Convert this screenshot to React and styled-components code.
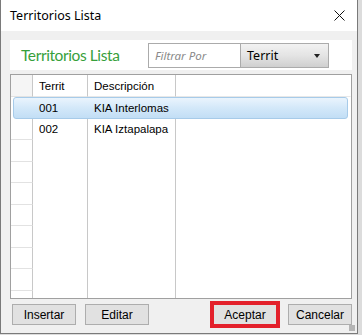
import React from 'react';
import styled, { createGlobalStyle } from 'styled-components';

const GlobalStyle = createGlobalStyle`
  html, body {
    margin: 0;
    padding: 0;
    background: #dcdcdc;
    width: 362px;
    height: 335px;
    overflow: hidden;
  }
`;

const Window = styled.div`
  width: 356px;
  height: 333px;
  background: #f0f0f0;
  border-left: 1px solid #7a7a7a;
  border-right: 1px solid #7a7a7a;
  border-bottom: 1px solid #7a7a7a;
  display: flex;
  flex-direction: column;
  font-family: "Liberation Sans", Arial, sans-serif;
  position: relative;
`;

const TitleBar = styled.div`
  height: 31px;
  background: #ffffff;
  display: flex;
  align-items: center;
  justify-content: space-between;
  padding: 0 8px 0 9px;
  font-family: "Noto Sans", "Open Sans", sans-serif;
  font-size: 12.5px;
  color: #000;
`;

const CloseButton = styled.div`
  width: 12px;
  height: 12px;
  margin-right: 4px;
  display: flex;
  align-items: center;
  justify-content: center;
`;

const Body = styled.div`
  flex: 1;
  display: flex;
  flex-direction: column;
  padding: 9px 5px 0 9px;
`;

const HeaderPanel = styled.div`
  height: 30px;
  background: #ffffff;
  display: flex;
  align-items: center;
  padding-left: 11px;
`;

const HeaderTitle = styled.div`
  font-family: Lato, "Noto Sans", sans-serif;
  font-size: 15.5px;
  letter-spacing: -0.4px;
  color: #36a03b;
  margin-top: -1px;
`;

const FilterGroup = styled.div`
  margin-left: auto;
  margin-right: 23px;
  display: flex;
  height: 25px;
  border: 1px solid #ababab;
  box-sizing: border-box;
`;

const FilterInput = styled.div`
  width: 92px;
  background: #fff;
  border-right: 1px solid #ababab;
  display: flex;
  align-items: center;
  padding-left: 6px;
  box-sizing: border-box;
  font-family: "Noto Sans", "Open Sans", sans-serif;
  font-style: italic;
  font-size: 11.5px;
  color: #8a8a8a;
`;

const Dropdown = styled.div`
  width: 87px;
  background: linear-gradient(to bottom, #f2f2f2 0%, #e4e4e4 50%, #cfcfcf 100%);
  display: flex;
  align-items: center;
  justify-content: space-between;
  padding: 1px 6px 0 6px;
  box-sizing: border-box;
  font-family: "Noto Sans", "Open Sans", sans-serif;
  font-size: 12.5px;
  color: #000;
`;

const Arrow = styled.div`
  width: 0;
  height: 0;
  border-left: 3.5px solid transparent;
  border-right: 3.5px solid transparent;
  border-top: 4px solid #222;
  margin-right: 2px;
`;

const Grid = styled.div`
  margin-top: 4px;
  height: 225px;
  width: 342px;
  background: #fff;
  border: 1px solid #a0a0a0;
  box-sizing: border-box;
  overflow: hidden;
  display: flex;
  flex-direction: column;
`;

const Row = styled.div`
  display: flex;
  height: ${p => (p.$header ? 22 : 21.5)}px;
  flex-shrink: 0;
  position: relative;

  ${p => p.$selected && `
    &::before {
      content: '';
      position: absolute;
      left: 2px;
      right: 3px;
      top: 0;
      bottom: 0;
      border: 1px solid #a7cbe9;
      border-radius: 3px;
      background: linear-gradient(to bottom, #eaf4fd 0%, #d3e8f9 50%, #c2def5 100%);
    }
  `}
`;

const RowHead = styled.div`
  width: 21px;
  flex-shrink: 0;
  border-right: 1px solid ${p => (p.$selected ? 'transparent' : '#c8c8c8')};
  border-bottom: 1px solid ${p => (p.$selected ? 'transparent' : '#e2e2e2')};
  background: ${p => (p.$header ? '#f5f5f5' : '#fff')};
  ${p => p.$selected && 'background: transparent;'}
  position: relative;
  z-index: 1;
`;

const Cell = styled.div`
  width: ${p => (p.$w ? `${p.$w}px` : 'auto')};
  flex: ${p => (p.$w ? '0 0 auto' : '1')};
  border-right: 1px solid ${p => (p.$selected || p.$last ? 'transparent' : '#c8c8c8')};
  ${p => p.$header && 'border-bottom: 1px solid #e8e8e8;'}
  display: flex;
  align-items: center;
  padding-left: 6px;
  box-sizing: border-box;
  font-size: 11.5px;
  color: #000;
  position: relative;
  z-index: 1;
  white-space: nowrap;
`;

const ButtonRow = styled.div`
  margin-top: 5px;
  display: flex;
  align-items: center;
  height: 21px;
  padding-left: 2px;
`;

const Button = styled.div`
  width: 64px;
  height: 21px;
  box-sizing: border-box;
  border: 1px solid #adadad;
  background: #e1e1e1;
  display: flex;
  align-items: center;
  justify-content: center;
  font-size: 12px;
  color: #000;
  margin-left: ${p => p.$gap || 0}px;
  ${p => p.$focused && `
    outline: 4px solid #e3202b;
    outline-offset: -1px;
  `}
`;

const Grip = styled.div`
  position: absolute;
  right: 2px;
  bottom: 2px;
  width: 6px;
  height: 6px;
  background-image: radial-gradient(circle, #b5b5b5 0.8px, transparent 1px);
  background-size: 2px 2px;
`;

const columns = [
  { key: 'id', label: 'Territ', w: 55 },
  { key: 'desc', label: 'Descripción', w: 88 },
];

const rows = [
  { id: '001', desc: 'KIA Interlomas', selected: true },
  { id: '002', desc: 'KIA Iztapalapa' },
];

const fillers = Array.from({ length: 8 }, (_, i) => ({ id: '', desc: '', filler: i }));

const App = () => {
  const all = [...rows, ...fillers];
  return (
    <>
      <GlobalStyle />
      <Window>
        <TitleBar>
          <span>Territorios Lista</span>
          <CloseButton>
            <svg width="11" height="11" viewBox="0 0 11 11">
              <path d="M0.5 0.5 L10.5 10.5 M10.5 0.5 L0.5 10.5" stroke="#111" strokeWidth="1" />
            </svg>
          </CloseButton>
        </TitleBar>
        <Body>
          <HeaderPanel>
            <HeaderTitle>Territorios Lista</HeaderTitle>
            <FilterGroup>
              <FilterInput>Filtrar Por</FilterInput>
              <Dropdown>
                <span>Territ</span>
                <Arrow />
              </Dropdown>
            </FilterGroup>
          </HeaderPanel>

          <Grid>
            <Row $header>
              <RowHead $header />
              {columns.map(c => (
                <Cell key={c.key} $w={c.w} $header>{c.label}</Cell>
              ))}
              <Cell $header $last />
            </Row>
            {all.map((r, i) => (
              <Row key={i} $selected={r.selected}>
                <RowHead $selected={r.selected} />
                <Cell $w={55} $selected={r.selected}>{r.id}</Cell>
                <Cell $w={88} $selected={r.selected}>{r.desc}</Cell>
                <Cell $last />
              </Row>
            ))}
          </Grid>

          <ButtonRow>
            <Button>Insertar</Button>
            <Button $gap={9}>Editar</Button>
            <Button $gap={64} $focused>Aceptar</Button>
            <Button $gap={11}>Cancelar</Button>
          </ButtonRow>
        </Body>
        <Grip />
      </Window>
    </>
  );
};

export default App;
